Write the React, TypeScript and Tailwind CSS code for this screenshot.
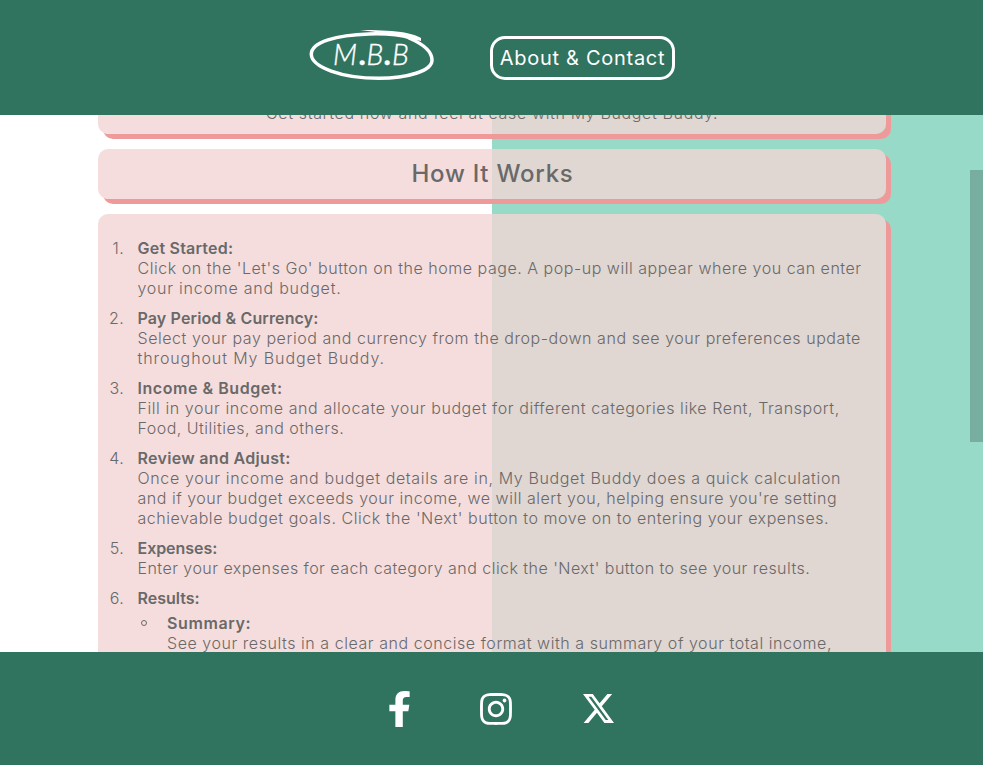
import React from "react";

type Line = { text: string; track: string };
type Step = { n: string; title: Line; body: Line[] };

const steps: Step[] = [
  { n: "1.", title: { text: "Get Started:", track: "tracking-[0.22px]" }, body: [
    { text: "Click on the 'Let's Go' button on the home page. A pop-up will appear where you can enter", track: "tracking-[0.527px]" },
    { text: "your income and budget.", track: "tracking-[0.77px]" } ] },
  { n: "2.", title: { text: "Pay Period & Currency:", track: "tracking-[0.13px]" }, body: [
    { text: "Select your pay period and currency from the drop-down and see your preferences update", track: "tracking-[0.552px]" },
    { text: "throughout My Budget Buddy.", track: "tracking-[0.9px]" } ] },
  { n: "3.", title: { text: "Income & Budget:", track: "tracking-[0.55px]" }, body: [
    { text: "Fill in your income and allocate your budget for different categories like Rent, Transport,", track: "tracking-[0.572px]" },
    { text: "Food, Utilities, and others.", track: "tracking-[0.49px]" } ] },
  { n: "4.", title: { text: "Review and Adjust:", track: "tracking-[0.31px]" }, body: [
    { text: "Once your income and budget details are in, My Budget Buddy does a quick calculation", track: "tracking-[0.63px]" },
    { text: "and if your budget exceeds your income, we will alert you, helping ensure you're setting", track: "tracking-[0.52px]" },
    { text: "achievable budget goals. Click the 'Next' button to move on to entering your expenses.", track: "tracking-[0.54px]" } ] },
  { n: "5.", title: { text: "Expenses:", track: "tracking-[-0.05px]" }, body: [
    { text: "Enter your expenses for each category and click the 'Next' button to see your results.", track: "tracking-[0.46px]" } ] },
  { n: "6.", title: { text: "Results:", track: "tracking-[0px]" }, body: [] },
];

const card = "shrink-0 rounded-[10px] bg-[#f2d4d4]/80 shadow-[5px_5px_0_#ef9a9a]";

function TextLine({ line, bold }: { line: Line; bold?: boolean }) {
  return (
    <div className={`whitespace-nowrap ${bold ? "font-semibold" : "font-light"} ${line.track}`}>{line.text}</div>
  );
}

function Logo() {
  return (
    <svg width="126" height="54" viewBox="0 0 126 54" className="block">
      <path fill="none" stroke="#fff" strokeWidth="3.500" strokeLinecap="round" d="M102 9 C92 6 75 4.5 60 5 C28 6 2 13 2.300 25.500 C3 38 32 49.300 70 49.300 C98 49.300 123.300 42 123 31 C123 23 114 15 100 9" />
      <path fill="#fff" d="M51 1 C66 1 80 1.500 92 3 C101 4.500 109 7 112 9 L112 12 C105 11 100 9 90 6.500 C78 4 64 3 51 1Z" />
      <g fill="#fff" fontFamily="Lato, sans-serif" fontStyle="italic" fontWeight="300" fontSize="28.500" stroke="#fff" strokeWidth="0.400">
        <text y="35.800" x="24 50.500 57.500 75.500 83">
          M<tspan fontWeight="900">.</tspan>B<tspan fontWeight="900">.</tspan>B
        </text>
      </g>
    </svg>
  );
}

export default function App() {
  return (
    <div className="flex h-[765px] w-[983px] flex-col overflow-hidden font-['Inter','Noto_Sans',sans-serif]">
      <header className="flex h-[115px] shrink-0 items-center justify-center gap-[55px] bg-[#30735f]">
        <div className="mb-[3px]"><Logo /></div>
        <a className="mt-px flex h-11 w-[185px] items-center justify-center whitespace-nowrap rounded-[15px] border-[3px] border-white pl-px text-[20px] tracking-[0.71px] text-white">About &amp; Contact</a>
      </header>

      <main className="relative flex h-[537px] shrink-0 flex-col items-start gap-[15px] overflow-hidden bg-linear-to-r from-white from-[492px] to-[#98dac8] to-[492px] pl-[98px] text-[16px] leading-5 text-[#696969]">
        <section className={`${card} -mt-20 flex h-[99px] w-[788px] items-end justify-center pb-[11px]`}>
          <TextLine line={{ text: "Get started now and feel at ease with My Budget Buddy.", track: "tracking-[0.64px]" }} />
        </section>
        <section className={`${card} flex h-[50px] w-[788px] items-center justify-center`}>
          <h2 className="whitespace-nowrap pl-px text-[24px] font-medium tracking-[0.75px]">How It Works</h2>
        </section>
        <section className={`${card} h-[560px] w-[788px] pt-[24px]`}>
          <ol className="flex flex-col gap-[10px]">
            {steps.map((s) => (
              <li key={s.n} className="flex">
                <span className="mr-[13.5px] w-[26px] shrink-0 text-right font-light tracking-[0.3px]">{s.n}</span>
                <div>
                  <TextLine line={s.title} bold />
                  {s.body.map((l) => <TextLine key={l.text} line={l} />)}
                  {s.n === "6." && (
                    <div className="mt-[5px] flex">
                      <span className="mr-[20px] ml-[3.5px] mt-[7px] size-[6px] shrink-0 rounded-full border border-[#696969]" />
                      <div>
                        <TextLine line={{ text: "Summary:", track: "tracking-[0.6px]" }} bold />
                        <TextLine line={{ text: "See your results in a clear and concise format with a summary of your total income,", track: "tracking-[0.549px]" }} />
                      </div>
                    </div>
                  )}
                </div>
              </li>
            ))}
          </ol>
        </section>
        <div className="absolute right-0 top-[55px] h-[272px] w-[13px] bg-[#78ae9f]" />
      </main>

      <footer className="flex h-[113px] shrink-0 items-center bg-[#30735f] pl-[389px] text-white">
        <svg width="21" height="36" viewBox="18 0 284 512" preserveAspectRatio="none" fill="currentColor"><path d="M279.14 288l14.22-92.66h-88.91v-60.13c0-25.35 12.42-50.06 52.24-50.06h40.42V6.26S260.43 0 225.36 0c-73.22 0-121.08 44.38-121.08 124.72v70.62H22.89V288h81.39v224h100.17V288z" /></svg>
        <svg className="ml-[70px]" width="32" height="32" viewBox="0 31 448 450" fill="currentColor"><path d="M224.1 141c-63.6 0-114.9 51.3-114.9 114.9s51.3 114.9 114.9 114.9S339 319.500 339 255.900 287.700 141 224.100 141zm0 189.600c-41.100 0-74.700-33.500-74.700-74.700s33.500-74.700 74.700-74.700 74.700 33.500 74.700 74.700-33.600 74.700-74.700 74.700zm146.400-194.300c0 14.900-12 26.800-26.800 26.800-14.900 0-26.800-12-26.800-26.800s12-26.800 26.800-26.800 26.800 12 26.800 26.800zm76.100 27.200c-1.700-35.900-9.900-67.700-36.200-93.900-26.200-26.200-58-34.400-93.900-36.200-37-2.100-147.900-2.100-184.900 0-35.800 1.700-67.600 9.900-93.900 36.100s-34.400 58-36.200 93.900c-2.100 37-2.100 147.900 0 184.900 1.700 35.900 9.900 67.700 36.200 93.900s58 34.400 93.900 36.200c37 2.100 147.900 2.100 184.900 0 35.900-1.700 67.700-9.900 93.900-36.200 26.200-26.200 34.400-58 36.200-93.900 2.100-37 2.100-147.800 0-184.800zM398.800 388c-7.800 19.600-22.900 34.700-42.600 42.600-29.500 11.700-99.500 9-132.100 9s-102.700 2.600-132.100-9c-19.600-7.800-34.700-22.900-42.600-42.600-11.700-29.500-9-99.500-9-132.100s-2.600-102.700 9-132.100c7.800-19.600 22.900-34.700 42.600-42.600 29.500-11.700 99.500-9 132.100-9s102.700-2.600 132.100 9c19.600 7.800 34.700 22.900 42.600 42.600 11.700 29.500 9 99.500 9 132.100s2.700 102.700-9 132.100z" /></svg>
        <svg className="ml-[71px]" width="31" height="29" viewBox="26.800 48 460.200 416" preserveAspectRatio="none" fill="currentColor"><path d="M389.2 48h70.600L305.600 224.200 487 464H345L233.700 318.600 106.500 464H35.800L200.700 275.500 26.800 48H172.400L272.900 180.900 389.200 48zM364.400 421.800h39.100L151.100 88h-42L364.400 421.800z" /></svg>
      </footer>
    </div>
  );
}
